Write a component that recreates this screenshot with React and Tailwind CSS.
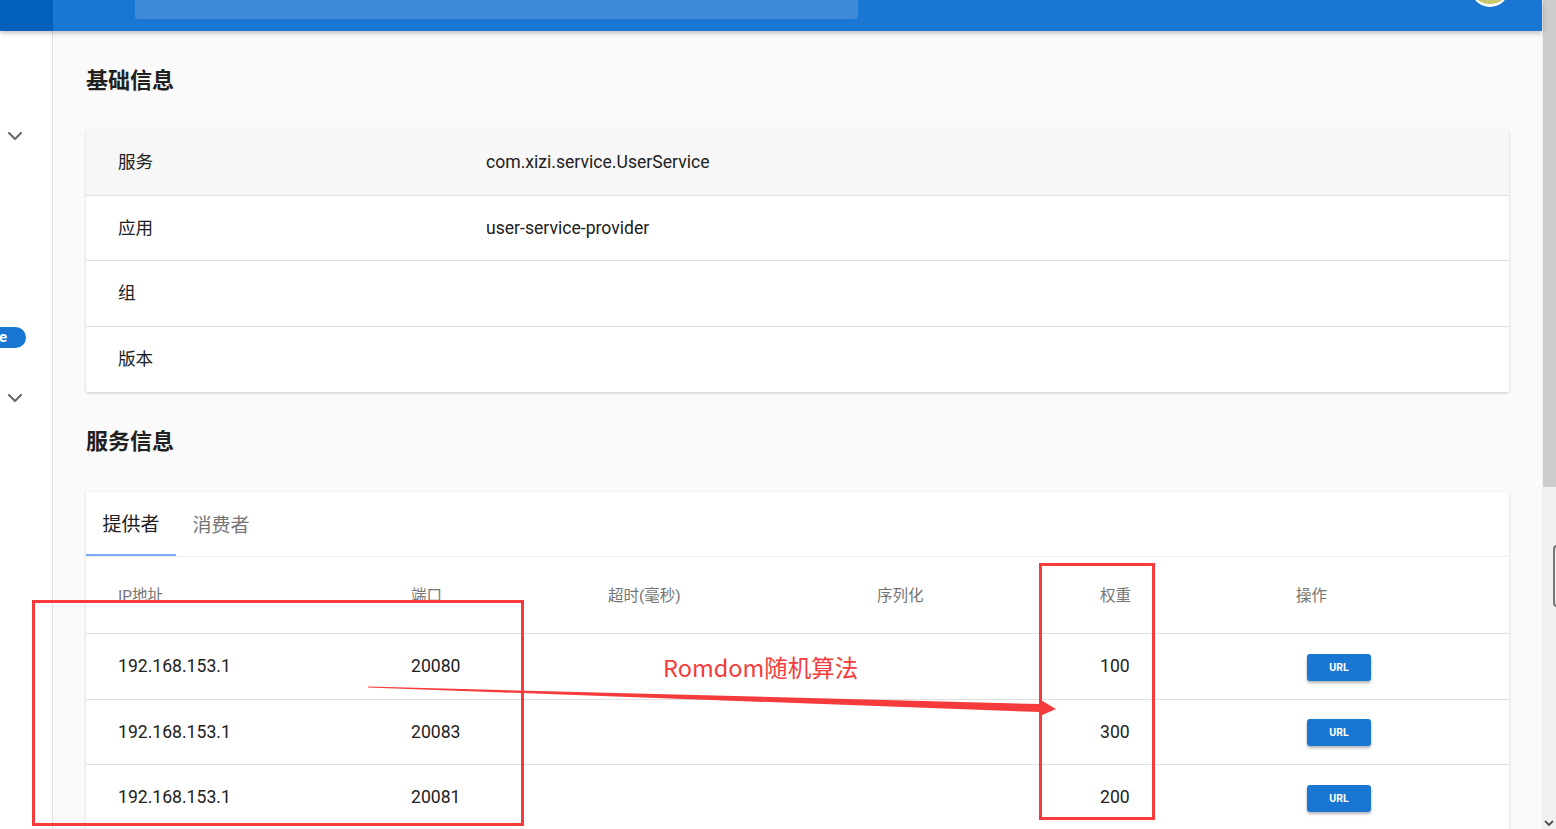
import React from "react";

const Chevron = ({ className = "" }) => (
  <svg className={className} width="16" height="10" viewBox="0 0 16 10" fill="none">
    <path d="M2 2l6 6 6-6" stroke="#6b6b6b" strokeWidth="2.2" strokeLinecap="round" strokeLinejoin="round" />
  </svg>
);

const infoRows = [
  ["服务", "com.xizi.service.UserService"],
  ["应用", "user-service-provider"],
  ["组", ""],
  ["版本", ""],
];

const providers = [
  ["192.168.153.1", "20080", "100"],
  ["192.168.153.1", "20083", "300"],
  ["192.168.153.1", "20081", "200"],
];

const cols = "grid grid-cols-[293px_197px_269px_223px_196px_1fr] pl-[32px] items-center";

export default function App() {
  return (
    <div className="w-[1556px] h-[829px] overflow-hidden flex bg-[#fafafa] font-['Roboto','Noto_Sans_CJK_SC',sans-serif] text-[#212121] relative">
      <div className="w-[1542px] flex flex-col">
        {/* top bar */}
        <header className="h-[31px] shrink-0 bg-[#1976d2] flex relative z-10 shadow-[0_2px_5px_rgba(0,0,0,0.25)]">
          <div className="w-[53px] bg-[#0160bb]" />
          <div className="ml-[82px] w-[723px] h-[19px] bg-[#3f8ad8] rounded-b-[3px]" />
          <div className="ml-auto mr-[33px] -mt-[33px] w-[38px] h-[40px] rounded-full bg-[#c9c86d] border-b-[3px] border-white" />
        </header>

        <div className="flex flex-1 min-h-0">
          {/* sidebar */}
          <aside className="w-[53px] shrink-0 bg-white border-r border-[#e0e0e0] flex flex-col">
            <div className="h-[100px]" />
            <div className="pl-[7px]"><Chevron /></div>
            <div className="h-[186px]" />
            <div className="w-[26px] h-[21px] bg-[#1976d2] rounded-r-full flex items-center">
              <span className="text-white font-bold text-[15px] leading-none -ml-[1px]">e</span>
            </div>
            <div className="h-[45px]" />
            <div className="pl-[7px]"><Chevron /></div>
          </aside>

          {/* main */}
          <main className="flex-1 pl-[33px] pr-[33px] pt-[34px]">
            <h2 className="text-[22px] font-bold leading-[32px] text-[#212121]">基础信息</h2>
            <div className="mt-[33px] bg-white shadow-[0_1px_3px_rgba(0,0,0,0.18)] rounded-[2px]">
              {infoRows.map(([k, v], i) => (
                <div
                  key={k}
                  className={`h-[65.5px] flex items-center text-[17.6px] ${i === 0 ? "bg-[#f7f7f7]" : ""} ${i < infoRows.length - 1 ? "border-b border-[#e0e0e0]" : ""}`}
                >
                  <div className="w-[400px] pl-[32px] shrink-0">{k}</div>
                  <div>{v}</div>
                </div>
              ))}
            </div>

            <h2 className="mt-[34px] text-[22px] font-bold leading-[32px] text-[#212121]">服务信息</h2>
            <div className="mt-[34px] bg-white shadow-[0_1px_3px_rgba(0,0,0,0.18)] rounded-[2px]">
              <div className="h-[65px] flex border-b border-[#eeeeee]">
                <div className="w-[90px] pt-[5px] flex items-center justify-center text-[19px] text-[#212121] border-b-2 border-[#7baaf7]">提供者</div>
                <div className="w-[90px] pt-[5px] flex items-center justify-center text-[19px] text-[#757575]">消费者</div>
              </div>
              <div className={`${cols} h-[77px] pt-[3px] border-b border-[#e0e0e0] text-[15.5px] text-[#757575]`}>
                <div>IP地址</div>
                <div>端口</div>
                <div>超时(毫秒)</div>
                <div>序列化</div>
                <div>权重</div>
                <div>操作</div>
              </div>
              {providers.map(([ip, port, w], i) => (
                <div key={i} className={`${cols} h-[65.5px] border-b border-[#e0e0e0] text-[17.6px]`}>
                  <div>{ip}</div>
                  <div>{port}</div>
                  <div />
                  <div />
                  <div>{w}</div>
                  <div>
                    <button className="ml-[11px] w-[64px] h-[27px] rounded-[3px] bg-[#1976d2] text-white text-[10.5px] font-bold shadow-[0_2px_3px_rgba(0,0,0,0.3)]">URL</button>
                  </div>
                </div>
              ))}
            </div>
          </main>
        </div>
      </div>

      {/* scrollbar */}
      <div className="w-[14px] bg-[#f1f1f1] flex flex-col relative">
        <div className="h-[487px] bg-[#cdcdcd] ml-[1px]" />
        <div className="mt-auto mb-[2px] flex justify-center">
          <svg width="10" height="7" viewBox="0 0 10 7"><path d="M1 1l4 4 4-4" stroke="#505050" strokeWidth="1.8" fill="none" /></svg>
        </div>
        <div className="absolute left-[11px] top-[545px] w-[8px] h-[62px] border-2 border-[#777] rounded-[4px]" />
      </div>

      {/* annotations overlay */}
      <div className="absolute left-[32px] top-[600px] w-[492px] h-[226px] border-[3px] border-[#f63b3b]" />
      <div className="absolute left-[1039px] top-[563px] w-[116px] h-[257px] border-[3px] border-[#f63b3b]" />
      <div className="absolute left-[663px] top-[650px] text-[23.5px] leading-[34px] text-[#f53b3b] font-['Noto_Sans_CJK_SC',sans-serif]">Romdom随机算法</div>
      <svg className="absolute left-0 top-0 pointer-events-none" width="1556" height="829">
        <polygon points="368,686.5 1040,704 1040,712 368,687.5" fill="#f53b3b" />
        <polygon points="1040,699.5 1056,709 1040,716" fill="#f53b3b" />
      </svg>
    </div>
  );
}
